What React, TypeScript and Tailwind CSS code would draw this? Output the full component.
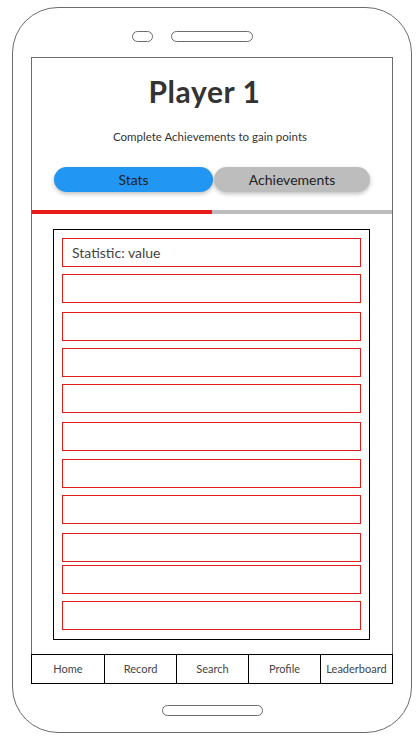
const rowGaps = [
  "mt-0",
  "mt-[7px]",
  "mt-[9px]",
  "mt-[7px]",
  "mt-[7px]",
  "mt-[9px]",
  "mt-[8px]",
  "mt-[7px]",
  "mt-[9px]",
  "mt-[3px]",
  "mt-[7px]",
]

const navItems = ["Home", "Record", "Search", "Profile", "Leaderboard"]

function StatRow({ gap, label }: { gap: string; label?: string }) {
  return (
    <div className={`${gap} h-[29px] border border-[#e31c1c] flex items-center pl-[9px] text-[14px] text-[#444]`}>
      {label}
    </div>
  )
}

export default function App() {
  return (
    <div className="w-[420px] h-[744px] bg-white pt-[7px] pl-[12px] font-['Lato','Open_Sans',sans-serif]">
      <div className="w-[400px] h-[726px] border border-[#6b6b6b] rounded-[46px] flex flex-col">
        {/* speaker + camera */}
        <div className="flex mt-[23px] ml-[119px]">
          <div className="w-[21px] h-[11px] rounded-full border border-[#6b6b6b]" />
          <div className="ml-[18px] w-[82px] h-[11px] rounded-full border border-[#6b6b6b]" />
        </div>

        {/* screen */}
        <div className="ml-[18px] mt-[15px] w-[362px] h-[627px] border-x border-t border-[#6b6b6b] flex flex-col">
          <h1 className="mt-[15px] h-[36px] pr-[15px] text-center text-[30px] leading-[36px] tracking-[0.6px] font-bold text-[#333]">
            Player 1
          </h1>
          <p className="mt-[21px] pr-[4px] text-center text-[11.5px] leading-[14px] text-[#333]">
            Complete Achievements to gain points
          </p>

          <div className="mt-[23px] flex ml-[22px]">
            <div className="w-[159px] h-[25px] rounded-full bg-[#2196f3] shadow-[0_2px_4px_rgba(0,0,0,0.25)] flex items-center justify-center text-[14px] text-[#222]">
              Stats
            </div>
            <div className="ml-px w-[156px] h-[25px] rounded-full bg-[#bdbdbd] shadow-[0_2px_4px_rgba(0,0,0,0.25)] flex items-center justify-center text-[14px] text-[#222]">
              Achievements
            </div>
          </div>

          <div className="mt-[18px] flex h-[4px]">
            <div className="w-[180px] bg-[#e91c1c]" />
            <div className="flex-1 bg-[#bdbdbd]" />
          </div>

          <div className="mt-[15px] ml-[21px] w-[317px] border border-black pt-[8px] px-[8px] pb-[9px]">
            {rowGaps.map((gap, i) => (
              <StatRow key={i} gap={gap} label={i === 0 ? "Statistic: value" : undefined} />
            ))}
          </div>

          <div className="mt-auto -mx-px grid grid-cols-5 h-[30px] border border-black">
            {navItems.map((item, i) => (
              <div
                key={item}
                className={`flex items-center justify-center text-[11px] text-[#444] ${i > 0 ? "border-l border-black" : ""}`}
              >
                {item}
              </div>
            ))}
          </div>
        </div>

        {/* home button */}
        <div className="mt-[21px] flex justify-center">
          <div className="w-[101px] h-[11px] rounded-full border border-[#6b6b6b]" />
        </div>
      </div>
    </div>
  )
}
